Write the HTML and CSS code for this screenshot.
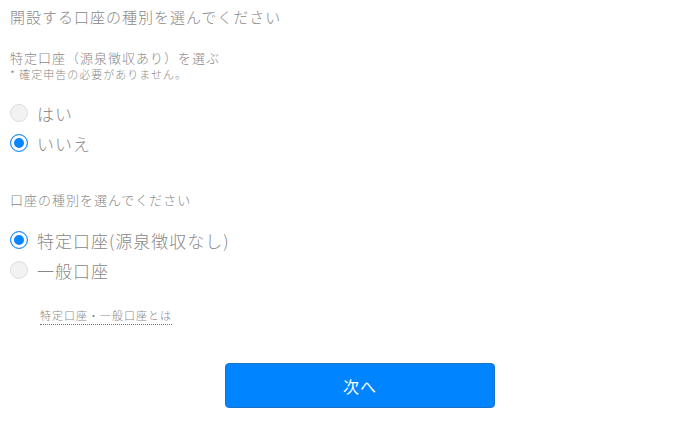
FILE: index.html
```html
<!DOCTYPE html>
<html lang="ja">
<head>
    <meta charset="UTF-8">
    <meta name="viewport" content="width=device-width, initial-scale=1.0">
    <title>口座の種別</title>
    <link rel="stylesheet" href="styles.css">
</head>
<body>

<div class="form">
    <h1 class="page-title">開設する口座の種別を選んでください</h1>

    <div class="question">
        <p class="question-label">特定口座（源泉徴収あり）を選ぶ</p>
        <p class="question-note">* 確定申告の必要がありません。</p>
        <label class="choice">
            <input type="radio" name="withholding" value="yes">
            <span class="mark"></span>
            <span class="choice-text">はい</span>
        </label>
        <label class="choice">
            <input type="radio" name="withholding" value="no" checked>
            <span class="mark"></span>
            <span class="choice-text">いいえ</span>
        </label>
    </div>

    <div class="question question-type">
        <p class="question-label">口座の種別を選んでください</p>
        <label class="choice">
            <input type="radio" name="type" value="tokutei" checked>
            <span class="mark"></span>
            <span class="choice-text">特定口座(源泉徴収なし)</span>
        </label>
        <label class="choice">
            <input type="radio" name="type" value="ippan">
            <span class="mark"></span>
            <span class="choice-text">一般口座</span>
        </label>
        <a class="help-link" href="#">特定口座・一般口座とは</a>
    </div>

    <div class="actions">
        <button class="next-btn" type="button">次へ</button>
    </div>
</div>

</body>
</html>
```

FILE: styles.css
```css
body {
    font-family: "Noto Sans CJK JP", "Noto Sans", sans-serif;
    font-weight: 300;
    background-color: #fff;
    color: #888;
    margin: 0;
    padding: 0 10px;
}

.page-title {
    font-size: 15px;
    font-weight: 300;
    letter-spacing: 1px;
    line-height: 20px;
    margin: 7px 0 0;
    color: #888;
}

.question {
    margin-top: 22px;
}

.question-label {
    font-size: 13px;
    letter-spacing: 1px;
    line-height: 18px;
    margin: 0;
}

.question-note {
    font-size: 11px;
    letter-spacing: 1px;
    line-height: 14px;
    margin: 0 0 17px;
}

.choice {
    display: flex;
    align-items: center;
    gap: 9px;
    height: 30px;
    cursor: pointer;
}

.choice input {
    display: none;
}

.mark {
    width: 16px;
    height: 16px;
    border: 1px solid #ddd;
    border-radius: 50%;
    background-color: #f2f2f2;
    box-sizing: content-box;
    flex-shrink: 0;
}

.choice input:checked + .mark {
    border-color: #1f8eff;
    background-color: #0a84ff;
    box-shadow: inset 0 0 0 3px #fff;
}

.choice-text {
    font-size: 17px;
    letter-spacing: 1px;
}

.question-type {
    margin-top: 33px;
}

.question-type .question-label {
    margin-bottom: 16px;
}

.help-link {
    display: inline-block;
    margin: 22px 0 0 30px;
    font-size: 11px;
    letter-spacing: 1px;
    line-height: 16px;
    color: #888;
    text-decoration: none;
    border-bottom: 1px dotted #777;
    padding-bottom: 1px;
}

.actions {
    padding: 38px 0 0 215px;
}

.next-btn {
    width: 270px;
    height: 45px;
    background-color: #0084ff;
    border: 1px solid #1a73c9;
    border-radius: 4px;
    color: #fff;
    font-family: inherit;
    font-weight: 400;
    font-size: 16px;
    letter-spacing: 1px;
    cursor: pointer;
}
```
